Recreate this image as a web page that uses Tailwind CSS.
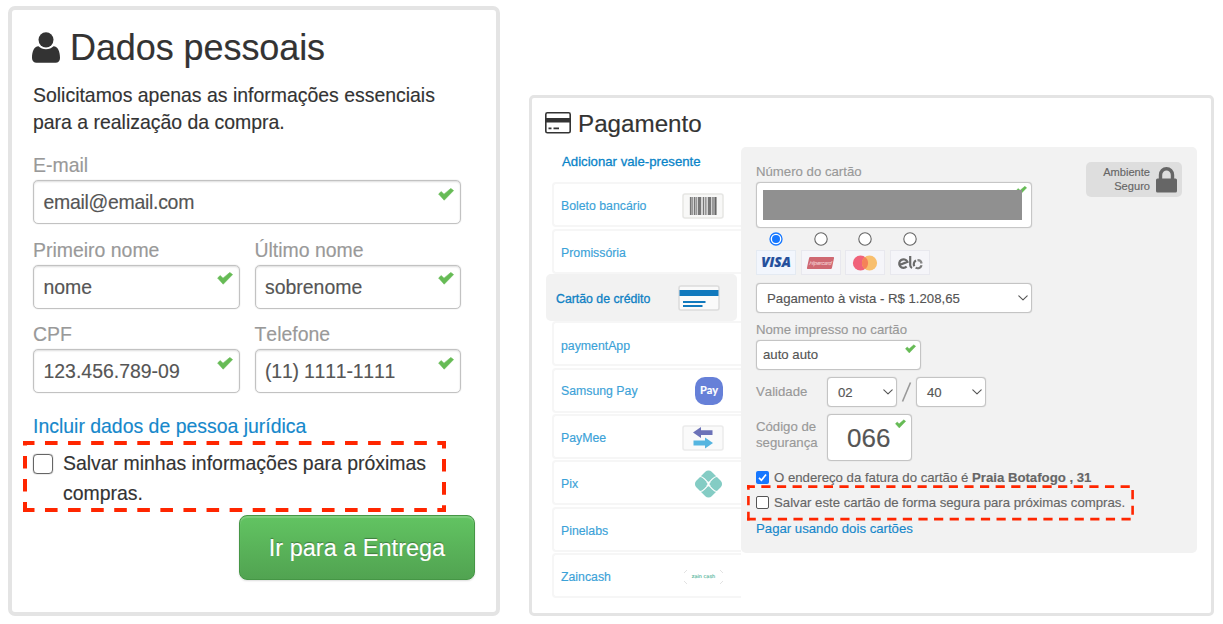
<!DOCTYPE html>
<html lang="pt-BR">
<head>
<meta charset="utf-8">
<title>Checkout</title>
<script src="https://cdn.jsdelivr.net/npm/@tailwindcss/browser@4"></script>
</head>
<body class="flex h-[624px] w-[1223px] items-start overflow-hidden bg-white font-['Liberation_Sans',Arial,sans-serif] text-[#333] [-webkit-text-stroke:0.15px] [font-kerning:none]">

<svg class="hidden">
  <symbol id="check" viewBox="0 0 16 13"><path d="M0.6 6 L3.2 3.6 L6 6.2 L12.8 0.4 L15.6 2.6 L6.2 12.2 Z" fill="#66bb55" stroke="#66bb55" stroke-width=".6" stroke-linejoin="round"/></symbol>
  <symbol id="chev" viewBox="0 0 10 6"><path d="M.8 .8 L5 4.9 L9.2 .8" fill="none" stroke="#555" stroke-width="1.1" stroke-linecap="round" stroke-linejoin="round"/></symbol>
</svg>

<!-- Dados pessoais -->
<section class="mt-[6px] ml-2 h-[610px] w-[492px] shrink-0 rounded-[7px] border-4 border-[#e4e4e4] text-[19.45px]">
  <h1 class="mt-4 flex h-[42px] items-center pl-5 text-[36px] leading-[42px] tracking-[-0.08px]">
    <svg class="mr-[9px] h-[31px] w-[29px]" viewBox="0 0 29 31" fill="#333"><ellipse cx="14" cy="7.8" rx="7.5" ry="7.6"/><path d="M6.5 14.3 C2 14.6 0 19.5 0 26 C0 29 2 30.7 4.5 30.7 H23.6 C26.2 30.7 28 29 28 26 C28 19.5 26 14.6 21.5 14.3 C19.5 16.2 17 17.2 14 17.2 C11 17.2 8.5 16.2 6.5 14.3 Z"/></svg>
    <span class="pt-[2px]">Dados pessoais</span>
  </h1>
  <p class="mt-[14px] pl-[21px] leading-[26.6px]">Solicitamos apenas as informações essenciais<br>para a realização da compra.</p>

  <div class="mt-[17px] flex w-[449px] flex-col gap-[12.5px] pl-[21px]">
    <div>
      <div class="h-7 leading-[27px] text-[#999]">E-mail</div>
      <div class="flex h-[44px] items-start justify-between rounded-[5px] border border-[#c2c2c2] pr-[6px] pl-[9.5px] leading-[42px] tracking-[-0.28px] text-[#555] shadow-[0_0_1px_#bbb,inset_0_1px_2px_#0002]">email@email.com<svg class="mt-[6.5px] h-[13px] w-4"><use href="#check"/></svg></div>
    </div>
    <div class="grid grid-cols-2 gap-[15px]">
      <div>
        <div class="h-7 leading-[26px] text-[#999]">Primeiro nome</div>
        <div class="flex h-[44px] items-start justify-between rounded-[5px] border border-[#c2c2c2] pr-[6px] pl-[9.5px] leading-[42px] text-[#555] shadow-[0_0_1px_#bbb,inset_0_1px_2px_#0002]">nome<svg class="mt-[6.5px] h-[13px] w-4"><use href="#check"/></svg></div>
      </div>
      <div>
        <div class="h-7 leading-[26px] text-[#999]">Último nome</div>
        <div class="flex h-[44px] items-start justify-between rounded-[5px] border border-[#c2c2c2] pr-[6px] pl-[9.5px] leading-[42px] text-[#555] shadow-[0_0_1px_#bbb,inset_0_1px_2px_#0002]">sobrenome<svg class="mt-[6.5px] h-[13px] w-4"><use href="#check"/></svg></div>
      </div>
    </div>
    <div class="grid grid-cols-2 gap-[15px]">
      <div>
        <div class="h-7 leading-[27px] text-[#999]">CPF</div>
        <div class="flex h-[44px] items-start justify-between rounded-[5px] border border-[#c2c2c2] pr-[6px] pl-[9.5px] leading-[42px] text-[#555] shadow-[0_0_1px_#bbb,inset_0_1px_2px_#0002]">123.456.789-09<svg class="mt-[6.5px] h-[13px] w-4"><use href="#check"/></svg></div>
      </div>
      <div>
        <div class="h-7 leading-[27px] text-[#999]">Telefone</div>
        <div class="flex h-[44px] items-start justify-between rounded-[5px] border border-[#c2c2c2] pr-[6px] pl-[9.5px] leading-[42px] tracking-[-0.2px] text-[#555] shadow-[0_0_1px_#bbb,inset_0_1px_2px_#0002]">(11) 1111-1111<svg class="mt-[6.5px] h-[13px] w-4"><use href="#check"/></svg></div>
      </div>
    </div>
  </div>

  <a class="mt-5 block h-7 pl-[21px] leading-[27px] text-[#1688cb]">Incluir dados de pessoa jurídica</a>

  <div class="relative ml-[11px] h-[71px] w-[423px]">
    <svg class="absolute inset-0" width="423" height="71" fill="none" stroke="#ff2600" stroke-width="4" stroke-dasharray="12.6 10.48">
      <path d="M-1.1 2 H423" /><path d="M-1.1 69 H423"/><path d="M2 -8.2 V71"/><path d="M421 -5.1 V71"/>
    </svg>
    <label class="flex pt-[8px] pl-[10px]">
      <span class="mt-[5px] mr-[10px] size-5 shrink-0 rounded-[4px] border-[1.5px] border-[#666] shadow-[0_0_1px_#555]"></span>
      <span class="leading-[29.6px]">Salvar minhas informações para próximas<br>compras.</span>
    </label>
  </div>

  <button class="mt-[3px] ml-[227px] block h-[65px] w-[236px] rounded-[8px] border border-[#459645] bg-linear-to-b from-[#62c462] to-[#51a351] pt-[2px] text-[23.5px] text-white shadow-[inset_0_2px_1px_#ffffff30,0_1px_2px_#0002] [text-shadow:0_-1px_1px_#0005]">Ir para a Entrega</button>
</section>

<!-- Pagamento -->
<section class="mt-[95px] ml-[29px] h-[521px] w-[685px] shrink-0 rounded-[5px] border-[3px] border-[#e4e4e4] text-[13.2px]">
  <h2 class="mt-[11px] flex h-7 items-center pl-[13px] text-[24.2px] leading-7">
    <svg class="mr-[7px] h-[22px] w-[26px]" viewBox="0 0 26 22"><rect x=".8" y=".8" width="24.4" height="20" rx="1.6" fill="none" stroke="#333" stroke-width="1.6"/><path d="M1 6 H25 V10.5 H1 Z M3.5 15.5 H6.5 V17.2 H3.5 Z M8.5 15.5 H14 V17.2 H8.5 Z" fill="#333"/></svg>
    <span class="pt-px">Pagamento</span>
  </h2>
  <div class="mt-[10px] flex items-start">
    <nav class="flex w-[209px] flex-col gap-[1.35px] pl-5 text-[12.3px] text-[#3ba2d8]">
      <a class="mb-[6px] block h-[28px] pl-[10px] text-[13.2px] leading-[29px] text-[#0a84c8] [-webkit-text-stroke:0.3px]">Adicionar vale-presente</a>
      <a class="flex h-[45px] items-center justify-between rounded-l-[4px] border-2 border-r-0 border-[#f6f6f6] pt-[2px] pr-[17px] pl-[7px]"><span class="pt-px">Boleto bancário</span>
        <svg width="42" height="26"><rect x="1" y="1" width="40" height="24" rx="2" fill="#f8f8f7" stroke="#e6e6e4" stroke-width="1.5"/><rect x="7.5" y="4" width="27" height="18" fill="#d4d4d4"/><g fill="#777"><path d="M8 4h1.5v18h-1.5z M12 4h1v18h-1z M16 4h3v18h-3z M21 4h1v18h-1z M26 4h3v18h-3z"/><path fill="#999" d="M10 4h1v18h-1z M13.5 4h1.5v18h-1.5z M23 4h1.5v18h-1.5z M30 4h1v18h-1z"/><path fill="#666" d="M31.5 4h1v18h-1z M33 4h1.5v18h-1.5z"/></g></svg>
      </a>
      <a class="flex h-[45px] items-center rounded-l-[4px] border-2 border-r-0 border-[#f6f6f6] pt-[4px] pl-[7px]">Promissória</a>
      <a class="mr-1 -ml-[6px] flex h-[47px] items-center justify-between rounded-[5px] bg-[#f2f2f2] pr-[17px] pl-[10px] -my-px text-[#0f81c4] [-webkit-text-stroke:0.3px]"><span class="pt-[4px]">Cartão de crédito</span>
        <svg class="mt-px" width="42" height="26"><rect x="1" y="1" width="40" height="24" rx="2" fill="#fafafa" stroke="#dcdcdc" stroke-width="1.5"/><path fill="#1179bd" d="M1.5 5h39v6h-39z M5 16h22.5v2h-22.5z M5 20h19.5v2h-19.5z"/></svg>
      </a>
      <a class="flex h-[45px] items-center rounded-l-[4px] border-2 border-r-0 border-[#f6f6f6] pt-[4px] pl-[7px]">paymentApp</a>
      <a class="flex h-[45px] items-center justify-between rounded-l-[4px] border-2 border-r-0 border-[#f6f6f6] pt-[2px] pr-[18px] pl-[7px]">Samsung Pay
        <span class="flex h-[28px] w-[28px] items-center justify-center rounded-[10px] bg-[#6680d8] pb-px font-[Lato,sans-serif] text-[11px] font-bold text-white">Pay</span>
      </a>
      <a class="flex h-[45px] items-center justify-between rounded-l-[4px] border-2 border-r-0 border-[#f6f6f6] pt-[2px] pr-[17px] pl-[7px]"><span class="pt-px">PayMee</span>
        <svg width="42" height="26"><rect x="1" y="1" width="40" height="24" rx="2" fill="#fafafa" stroke="#ebebeb" stroke-width="1.5"/><path fill="#6c72b8" d="M11 7.5 L19 2 V5.3 H30.5 V10 H19 V13 Z"/><path fill="#55b5e0" d="M31 18 L23 12.5 V15.6 H11.5 V20.5 H23 V23.6 Z"/></svg>
      </a>
      <a class="flex h-[45px] items-center justify-between rounded-l-[4px] border-2 border-r-0 border-[#f6f6f6] pt-[2px] pr-[17px] pl-[7px]">Pix
        <svg width="31" height="30" viewBox="0 0 31 30"><rect x="4.6" y="4.1" width="21.8" height="21.8" rx="4.5" transform="rotate(45 15.5 15)" fill="#84ccc4"/><path d="M5.5 7.5 H7 C9.5 7.5 10.6 9 12 10.4 L14.4 12.8 Q15.5 13.9 16.6 12.8 L19 10.4 C20.4 9 21.5 7.5 24 7.5 H25.5 M5.5 22.5 H7 C9.5 22.5 10.6 21 12 19.6 L14.4 17.2 Q15.5 16.1 16.6 17.2 L19 19.6 C20.4 21 21.5 22.5 24 22.5 H25.5" fill="none" stroke="#fff" stroke-width="1.2"/><path d="M13.8 13.2 L17.2 16.8 M17.2 13.2 L13.8 16.8" stroke="#fff" stroke-width="1.2"/></svg>
      </a>
      <a class="flex h-[45px] items-center rounded-l-[4px] border-2 border-r-0 border-[#f6f6f6] pt-[3px] pl-[7px]">Pinelabs</a>
      <a class="flex h-[45px] items-center justify-between rounded-l-[4px] border-2 border-r-0 border-[#f6f6f6] pt-[3px] pr-[17px] pl-[7px]">Zaincash
        <span class="relative flex h-4 w-[41px] items-center justify-center font-['DejaVu_Sans',sans-serif] text-[5px] text-[#5cb8a2]"><svg class="absolute inset-0" width="41" height="16" fill="none" stroke="#e2e2e2"><path d="M1 4 L4 1 M37 1 L40 4 M1 12 L4 15 M37 15 L40 12"/></svg>zain cash</span>
      </a>
    </nav>

    <div class="flex h-[406px] w-[456px] justify-between rounded-[5px] bg-[#f2f2f2] pt-[15px] pr-[15px] pl-[15px]">
      <div class="w-[276px] text-[#999]">
        <div class="h-5 leading-[20px]">Número do cartão</div>
        <div class="relative h-[46px] rounded-[4px] border border-[#c6c6c6] bg-white px-[6px] py-[7px] shadow-[0_0_1px_#bbb]">
          <svg class="absolute top-[3px] right-1 h-[9px] w-[11px]"><use href="#check"/></svg>
          <div class="relative h-[30px] w-[259px] bg-[#909090]"></div>
        </div>
        <div class="mt-[4px] flex gap-[4.5px]">
          <div class="flex w-10 flex-col items-center gap-1">
            <svg width="14" height="14"><circle cx="7" cy="7" r="6" fill="#fff" stroke="#1677ff" stroke-width="1.3"/><circle cx="7" cy="7" r="4" fill="#1677ff"/></svg>
            <span class="flex h-[25px] w-10 items-center justify-center border border-[#e4eaf2] bg-[#f2f6fd] font-['Open_Sans',sans-serif] text-[13.5px] font-extrabold text-[#244f9c] italic">VISA</span>
          </div>
          <div class="flex w-10 flex-col items-center gap-1">
            <svg width="14" height="14"><circle cx="7" cy="7" r="6.2" fill="#fff" stroke="#666" stroke-width="1.1"/></svg>
            <span class="flex h-[25px] w-10 items-center justify-center border border-[#e8e8ee] bg-[#f5f5f9]"><span class="flex h-3 w-[25px] -skew-x-12 items-center justify-center rounded-[1px] bg-[#cf6872] text-[5.5px] tracking-[-0.2px] text-[#f0c4c8] italic">Hipercard</span></span>
          </div>
          <div class="flex w-10 flex-col items-center gap-1">
            <svg width="14" height="14"><circle cx="7" cy="7" r="6.2" fill="#fff" stroke="#666" stroke-width="1.1"/></svg>
            <span class="flex h-[25px] w-10 items-center justify-center border border-[#e8e8ee] bg-[#f5f5f9]"><svg width="26" height="16"><circle cx="8.5" cy="8" r="7.6" fill="#f0627a"/><circle cx="17.5" cy="8" r="7.6" fill="#f8bf6e"/><path d="M13 1.9 A7.6 7.6 0 0 1 13 14.1 A7.6 7.6 0 0 1 13 1.9" fill="#f58258"/></svg></span>
          </div>
          <div class="flex w-10 flex-col items-center gap-1">
            <svg width="14" height="14"><circle cx="7" cy="7" r="6.2" fill="#fff" stroke="#666" stroke-width="1.1"/></svg>
            <span class="flex h-[25px] w-10 items-center justify-center border border-[#e8e8ee] bg-[#f5f5f9]"><svg width="26" height="14" fill="none" stroke="#6a6a6a" stroke-width="2.2"><path d="M2 9.2 L10.4 5.8 A4.3 4.3 0 1 0 9.6 10.6"/><path d="M13.2 0 V9 Q13.2 11 15 12"/><path d="M17.3 10.2 A4 4 0 0 1 19 4.6"/><path d="M20.5 4.1 A4 4 0 0 1 24.6 7.5" stroke="#888"/><path d="M24.6 9.3 A4 4 0 0 1 18.6 11.6" stroke="#777"/></svg></span>
          </div>
        </div>
        <div class="mt-2 flex h-[30px] items-center justify-between rounded-[4px] border border-[#c4c4c4] bg-white pr-[3px] pl-[10px] text-[#555] shadow-[0_0_1px_#bbb]"><span class="pt-px">Pagamento à vista - R$ 1.208,65</span><svg class="h-[6px] w-[10px]"><use href="#chev"/></svg></div>
        <div class="mt-[7px] h-5 leading-[20px]">Nome impresso no cartão</div>
        <div class="flex h-[30px] w-[165px] items-start justify-between rounded-[4px] border border-[#c4c4c4] bg-white pr-1 pl-[6px] leading-[28px] text-[#555] shadow-[0_0_1px_#bbb]">auto auto<svg class="mt-[3px] h-[10px] w-[11px]"><use href="#check"/></svg></div>
        <div class="mt-[7px] flex h-[30px] items-center">
          <span class="w-[71px]">Validade</span>
          <div class="flex h-[30px] w-[70px] items-center justify-between rounded-[4px] border border-[#c4c4c4] bg-white pr-[3px] pl-[10px] text-[#555] shadow-[0_0_1px_#bbb]"><span class="pt-px">02</span><svg class="h-[6px] w-[10px]"><use href="#chev"/></svg></div>
          <svg width="19" height="22"><path d="M5.5 20.5 L13.5 1.5" stroke="#999" stroke-width="1.6"/></svg>
          <div class="flex h-[30px] w-[70px] items-center justify-between rounded-[4px] border border-[#c4c4c4] bg-white pr-[3px] pl-[10px] text-[#555] shadow-[0_0_1px_#bbb]"><span class="pt-px">40</span><svg class="h-[6px] w-[10px]"><use href="#chev"/></svg></div>
        </div>
        <div class="mt-[7px] flex h-[47px] items-start">
          <span class="mt-[5px] w-[71px] leading-4">Código de segurança</span>
          <div class="flex h-[47px] w-[85px] items-start rounded-[4px] border border-[#c4c4c4] bg-white pl-[19px] text-[26px] leading-[46px] text-[#555] shadow-[0_0_1px_#bbb]">066<svg class="mt-1 ml-[5px] h-[10px] w-[11px]"><use href="#check"/></svg></div>
        </div>
        <label class="mt-[7px] flex h-[17px] items-center whitespace-nowrap text-[#666]">
          <svg class="mt-[2px] mr-[5px] size-[13px] shrink-0" viewBox="0 0 13 13"><rect width="13" height="13" rx="2" fill="#1677ff"/><path d="M3 6.8 L5.4 9.3 L10 3.5" fill="none" stroke="#fff" stroke-width="1.7"/></svg>
          <span class="pt-[2px]">O endereço da fatura do cartão é <b>Praia Botafogo , 31</b></span>
        </label>
        <div class="relative -ml-[9px] h-[36px] w-[387px]">
          <svg class="absolute inset-0" width="387" height="36" fill="none" stroke="#ff2600" stroke-width="2.6" stroke-dasharray="9.2 6.42">
            <path d="M-1.3 1.6 H385"/><path d="M-.4 34.1 H387"/><path d="M1.4 -4.5 V35.5"/><path d="M385.6 -10.6 V35.5"/>
          </svg>
          <label class="flex h-[36px] items-center pl-[9px] whitespace-nowrap text-[#666]">
            <span class="mr-[5px] mb-px size-[13px] shrink-0 rounded-[2px] border border-[#555] bg-white"></span>Salvar este cartão de forma segura para próximas compras.
          </label>
        </div>
        <a class="block leading-[15px] text-[#1688cb]">Pagar usando dois cartões</a>
      </div>
      <div class="flex h-[35px] w-24 items-center justify-end gap-[6px] rounded-[5px] bg-[#dedede] pr-[5px] text-right text-[11.1px] leading-[14px] text-[#666]">
        <span class="pb-[2px]">Ambiente<br>Seguro</span>
        <svg width="21" height="26"><path d="M4.5 12 V8 A6 6.3 0 0 1 16.5 8 V12" fill="none" stroke="#666" stroke-width="3.4"/><rect y="11.5" width="21" height="14" rx="1.5" fill="#666"/></svg>
      </div>
    </div>
  </div>
</section>
</body>
</html>
